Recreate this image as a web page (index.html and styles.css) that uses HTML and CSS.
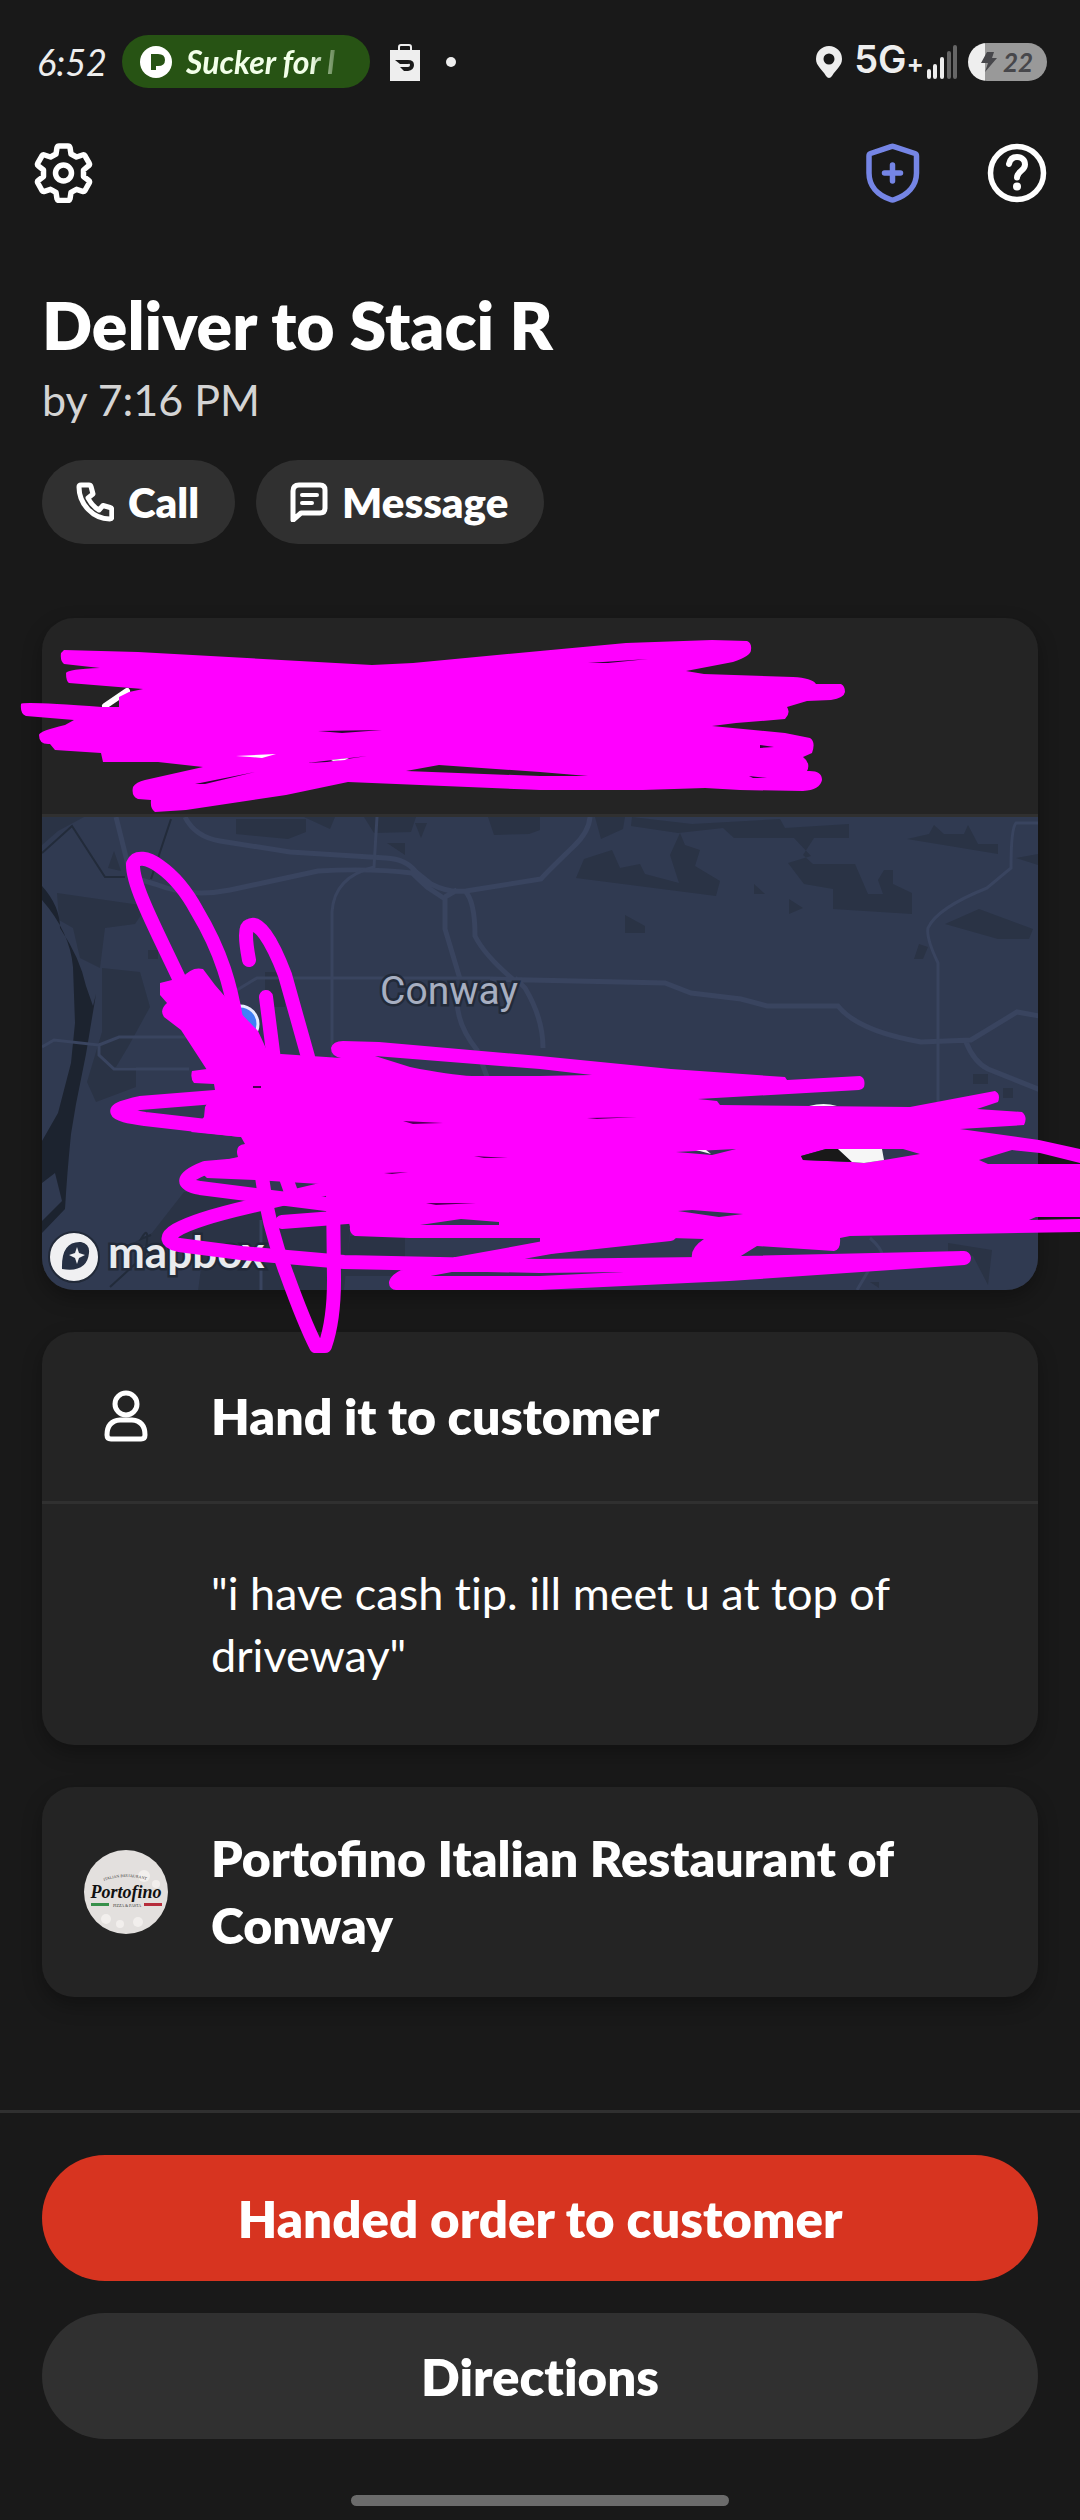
FILE: index.html
```html
<!DOCTYPE html>
<html lang="en">
<head>
<meta charset="utf-8">
<meta name="viewport" content="width=device-width, initial-scale=1">
<title>Deliver to Staci R</title>
<link rel="stylesheet" href="styles.css">
</head>
<body>
<div class="app">
  <header>
    <div class="status">
      <span class="clock">6:52</span>
      <div class="media">
        <svg width="32" height="32" viewBox="0 0 32 32" aria-hidden="true"><circle cx="16" cy="16" r="16" fill="#fff"/><path fill="#275314" d="M11 8h7q7 0 7 6t-7 6h-2v4h-5z"/></svg>
        <span class="track">Sucker for l</span>
      </div>
      <svg class="bag" width="30" height="38" viewBox="0 0 30 38" aria-hidden="true"><path d="M9 8V4q0-2 2-2h8q2 0 2 2v4" fill="none" stroke="#eee" stroke-width="2"/><path fill="#eee" d="M0 7h30v31H0z"/><path fill="#1a1a1a" d="M5 17h13q6 0 6 5t-6 6h-4l-4-4h8q2 0 2-2t-2-1H10z"/></svg>
      <span class="dot"></span>
      <div class="signals">
        <svg width="26" height="32" viewBox="0 0 26 32" aria-hidden="true"><path fill="#eee" fill-rule="evenodd" d="M13 0a13 13 0 0 0-13 13c0 7 6 10 10 17q3 4 6 0c4-7 10-10 10-17A13 13 0 0 0 13 0zm0 7.500a5.500 5.500 0 1 1 0 11 5.500 5.500 0 0 1 0-11z"/></svg>
        <span class="network">5G<small>+</small></span>
        <svg width="32" height="34" viewBox="0 0 32 34" stroke-width="4" stroke-linecap="round" aria-hidden="true"><path stroke="#eee" d="M3 26v6M9 21v11M16 14v18"/><path stroke="#666" d="M23 8v24M29 2v30"/></svg>
        <div class="battery">
          <svg width="16" height="20" viewBox="0 0 16 20" aria-hidden="true"><path fill="#47474b" d="M6 0h7l-2 6h5L4 20l3-9H0z"/></svg>
          <span>22</span>
        </div>
      </div>
    </div>
    <nav class="toolbar">
      <button class="icon" aria-label="Settings"><svg width="60" height="60" viewBox="0 0 60 60" fill="none" stroke="#fff" stroke-width="5.500" stroke-linejoin="round"><path d="M23 4.500Q23.500 3 25 3h9q1.500 0 2 1.500l1 6.500 5.500 3 6-2q1.500-.5 2.500.8l4.200 7.400q.8 1.500-.5 2.500L49.500 27v6.500l5.200 4q1.300 1 .5 2.500L51 47.500q-1 1.300-2.500.8l-6-2-5.500 3-1 6.500q-.5 1.700-2 1.700h-9q-1.500 0-2-1.700l-1-6.500-5.500-3-6 2q-1.500.5-2.500-.8L3.800 40q-.8-1.500.5-2.500l5.200-4V27l-5.200-4.200q-1.300-1-.5-2.600L8 12.800q1-1.300 2.500-.8l6 2 5.500-3z"/><circle cx="29.500" cy="30" r="8"/></svg></button>
      <button class="icon push" aria-label="Safety"><svg width="60" height="60" viewBox="0 0 60 60" fill="none" stroke="#7585e5" stroke-width="5.500" stroke-linejoin="round" stroke-linecap="round"><path d="M28 3.700q1.500-.7 3 0l21 6.800q1.500.5 1.500 2.500v17c0 13-9 22-22 26.500q-2 .8-4 0C14.500 52 6 43 6 30V13q0-2 1.500-2.500zM29.500 22v16M21.500 30h16"/></svg></button>
      <button class="icon" aria-label="Help"><svg width="60" height="60" viewBox="0 0 60 60" fill="none" stroke="#fff" stroke-width="5.500" stroke-linecap="round"><circle cx="30" cy="30" r="26.500"/><path d="M22 21c1-5 4-7 8-7 5 0 8 3 8 7.500 0 6.500-8 6.500-8 13" stroke-width="6"/><circle cx="30" cy="43.500" r="4" fill="#fff" stroke="none"/></svg></button>
    </nav>
  </header>

  <main>
    <h1>Deliver to Staci R</h1>
    <p class="due">by 7:16 PM</p>
    <div class="contact">
      <button class="chip"><svg width="38" height="40" viewBox="0 0 38 40" fill="none" stroke="#fff" stroke-width="5" stroke-linejoin="round"><path d="M5 3h8q1.500 0 2 1.500L17 12l-5 4q4 8 11 12l4-4.500 7 2q1.800.5 1.800 2V35q0 2-2 2C17 37 3 22 3 5q0-2 2-2z"/></svg>Call</button>
      <button class="chip"><svg width="38" height="40" viewBox="0 0 38 40" fill="none" stroke="#fff" stroke-width="5" stroke-linejoin="round" stroke-linecap="round"><path d="M9 3h21q5 0 5 5v18q0 5-5 5H11l-8 7V9q0-6 6-6z"/><path d="M12 13h15M12 21h10" stroke-width="4"/></svg>Message</button>
    </div>

    <section class="card place">
      <div class="address"></div>
      <svg class="map" viewBox="42 817 996 473" preserveAspectRatio="xMidYMid slice" role="img" aria-label="Map of Conway">
        <path fill="#303a51" d="M42 817h996v473H42z"/>
        <g fill="#2a3345">
          <path d="M42 817h42l-26 14-16 14zM236 819h70v13l-18 7-52-5zM305 817h30l-5 12-26-12M364 817h52l-5 15-37 1zM415 823h12l-6 15zM488 817h52v13l-11 4-35 1zM387 843h18v12zM595 817h30l-2 12-22 10zM632 817l60 7 88-5 5 9 64-4v14h-115l-11-10-45 5-47-7zM576 878l8-19 28-9 8 18 20-4 5 10 34 9-9-28 10-22 5 12 15 5-5 16 25 15-4 15zM794 838h20l-11 17 10 9h42l13 30h15l-5-14 6-10h9v14l19 9v21l-79-5v-20l-29-5-16-21 23-7zM907 839l22-5 5-9 10 9h20l4-9 10 19h20v10zM945 924l34-15 54 20-4 10h-31zM625 915l20 11v7h-20zM789 899l14 9-14 6zM754 884l11 10h-11zM919 944l9 3-5 12h-9zM1016 858l22-4v11z"/>
          <path d="M57 893l90 13-12 18-30 4-5 40-20-10-7-30-14-8zM102 968l38 4 10 35-22 40-12 20h20v20l-40 15-9-20 15-50zM108 868l6-17 7 20zM148 950h10v9h-10zM265 972h20v35h-20z"/>
          <path d="M184 1192h170l-10 98H240l-42 1 4-30-35-15h-40l25-13zM350 1236h55v40h-60zM948 1243l44 7-4 35-15-29-25-5zM973 1074h15v10h-15zM1003 1088h10v10h-10zM870 1282h9v6z"/>
        </g>
        <path fill="#1c232f" d="M42 886q18 20 18 42 20 30 26 58l7 20 3-12-10 60-10 50-5 30q-4 40-6 75l-23 24v-12l20-20-7-28-13 10v-42l16-28 13-50 4-40-2-56q-3-35-31-67z"/>
        <g fill="none" stroke="#39445f" stroke-width="5">
          <path d="M185 817q10 20 35 24l70 11 96 6q20 1 30 14l15 12q17 9 35 7l75-12q4-5 32-32 16-15 17-30M116 817l15 60 24 7q35 14 75 6l88-19q52-3 94 2l15 14 18 12v30l15 50M465 891q10 10 10 45 10 20 40 45M445 897l12-7M515 978l10 10q18 30 18 60M457 1000q0 25 20 50l15 40M490 979l175 4 26 10 50 6 26 7h71q20 25 83 36l50-2 46-28 22 4M966 1042q8 20 22 27l55 22"/>
          <path stroke-width="3" d="M377 817l-3 50q-40 10-42 45v150M42 1047l12-7 45 5v10l15 14h75M99 1045l20-8h85M237 990l20-12h233M261 1220v70M1038 823h-22q-5 5-5 45l-24 20q-50 20-59 40-2 10 10 35v140M870 1238q25 22 0 30l-13 22"/>
        </g>
        <path fill="none" stroke="#222b3a" stroke-width="2" d="M42 853l30-27 33 51h20M171 819l-20 60M151 1235l-10 4q10-18 4 16l-35 32"/>
        <text class="city" x="380" y="1004">Conway</text>
        <circle cx="240" cy="1024" r="18" fill="#4080f5" stroke="#e6edff" stroke-width="3"/>
        <circle cx="74" cy="1257" r="25" fill="#f0f0f2" stroke="#222a39" stroke-width="2"/>
        <path fill="#263044" d="M62 1269q-1-28 19-27 9 2 8 11-2 20-27 16z"/><path fill="#f0f0f2" d="M77 1247l2 6 6 2-6 3-2 6-2-6-6-3 6-2z"/>
        <text class="brand" x="108" y="1268">mapbox</text>
      </svg>
      <svg class="scribble" viewBox="42 618 996 672" preserveAspectRatio="none" aria-hidden="true">
        <path stroke="#fff" stroke-width="6" stroke-linecap="round" d="M105 706l22-15"/>
        <path fill="#f0f" fill-rule="evenodd" d="M64 650L138 652 372 665 413 663 540 651 626 643 712 640 747 641Q752 643 751 650 751 656 733 662L686 671 704 674 793 677Q812 678 816 684L841 684Q845 686 845 692 844 698 831 700L807 701 787 707Q791 713 785 719L736 723 712 726 785 733 810 738Q816 742 812 753L803 757Q811 763 807 771 822 770 822 780 820 790 803 791L740 790 705 788 643 790 540 790 348 782 286 795 186 810 155 812Q150 809 151 800L138 799Q131 796 133 787 136 782 145 780L203 767 158 762 103 762 101 753 55 750 50 744Q39 745 39 735 39 731 65 725L74 720 26 716Q20 714 21 704 21 701 102 707L119 707 119 697 129 692 143 689 69 683Q66 681 66 673 68 669 100 668L64 664Q60 661 61 653zM406 771L439 765 540 772 588 776 540 776z"/>
        <path fill="#2a0b31" d="M318 731l64-1-40 3zM195 784l60-12-50 12zM307 763l60-7-40 6zM588 663l60-4-40 4zM760 745l14 2-14 1zM749 776l18 2-14 0z"/>
        <path fill="#fff" d="M236 756l40-2-14 4-12-1zM331 760l18-2-4 2-12 1z"/>
        <path fill="#f0f" d="M160 983L172 980 182 978Q192 966 203 969L215 985 228 1000 258 1031 270 1057 207 1070 181 1030 164 1017Q159 1010 167 1003L160 995z"/>
        <path fill="#f0f" fill-rule="evenodd" d="M192 1071L207 1069 262 1057 281 1054 341 1058Q331 1056 331 1048 333 1041 343 1041L379 1042 540 1056 671 1069 785 1077 787 1080 860 1076Q866 1078 864 1087 862 1090 859 1090L698 1099 717 1101 720 1105 910 1107 995 1091Q1001 1094 998 1102L977 1109 1022 1112Q1028 1117 1024 1125L960 1129 1039 1140 1080 1149 1080 1163 1040 1153 1012 1150 979 1160 988 1164 1080 1164 1080 1232 850 1236 840 1238Q841 1250 834 1251L757 1246 736 1259 692 1259Q690 1248 704 1239L671 1238 540 1255 540 1238 410 1238 355 1236Q349 1233 350 1227L345 1205 322 1194 320 1184 255 1180 207 1178 195 1167 238 1157Q234 1145 245 1144L241 1137 191 1132 204 1117 205 1107 215 1090 214 1084 194 1083Q190 1078 192 1071zM375 1056L540 1069 592 1075 540 1076 472 1076Q450 1075 410 1067zM801 1156L826 1149 882 1149 903 1149 920 1154 884 1160 864 1163 852 1162 803 1160zM676 1152L736 1149 712 1155zM678 1211L692 1210 743 1214 719 1217zM420 1225L461 1219 499 1222 499 1225zM1029 1220L1036 1217 1080 1217 1080 1219z"/>
        <path fill="#191919" d="M801 1156L826 1149 838 1149 852 1162 803 1160z"/><path fill="#f6f6f6" d="M838 1149H882L884 1160 864 1163 852 1162zM809 1106q15-4 28 0zM696 1150h10l5 4z"/>
        <path fill="#510057" d="M403 1121l40 2-30 1zM474 1156l34 2-24 0zM384 1173l24-1-16 2zM426 1203l50 0-40 2zM587 1118l50-1-40 2zM253 1086h8v2h-8z"/>
        <g fill="none" stroke="#f0f" stroke-width="14" stroke-linecap="round" stroke-linejoin="round">
          <path d="M188 998C164 944 132 888 133 864 140 848 175 870 197 911 218 946 234 985 240 1050"/>
          <path d="M249 960Q243 928 249 926C258 920 271 938 285 975L308 1057"/>
          <path d="M266 997L274 1060"/>
          <path d="M215 1097L140 1103C108 1110 110 1114 145 1119L241 1130"/>
          <path d="M240 1165L205 1168C182 1177 180 1184 200 1188L350 1207 400 1210"/>
          <path d="M350 1183L248 1207C175 1224 153 1239 179 1245L241 1253 344 1262 540 1266 700 1264 964 1258 729 1274 540 1283 396 1283Q399 1274 440 1267L550 1247 670 1234"/>
          <path d="M282 1222L360 1216"/>
          <path d="M262 1177C267 1220 278 1252 287 1275Q304 1322 316 1346L325 1346Q334 1320 334 1280L333 1190M286 1178L291 1192"/>
        </g>
      </svg>
    </section>

    <section class="card">
      <div class="row">
        <svg class="person" width="84" height="56" viewBox="0 0 84 56" fill="none" stroke="#fff" stroke-width="5" aria-hidden="true"><circle cx="42" cy="15" r="11"/><path d="M27 50q-4 0-4-4 0-14 13-15h12q13 1 13 15 0 4-4 4z"/></svg>
        <h2>Hand it to customer</h2>
      </div>
      <p class="note">"i have cash tip. ill meet u at top of driveway"</p>
    </section>

    <section class="card">
      <div class="row store">
        <svg width="84" height="84" viewBox="0 0 84 84" aria-hidden="true"><circle cx="42" cy="42" r="42" fill="#e3e0de"/><g fill="#f2efed"><circle cx="22" cy="69" r="5"/><circle cx="36" cy="74" r="4"/><circle cx="54" cy="72" r="5"/><circle cx="60" cy="26" r="6"/><circle cx="72" cy="34" r="4"/></g><path id="arc" d="M20 31q22-8 46 0" fill="none"/><text class="logo-small"><textPath href="#arc">ITALIAN RESTAURANT</textPath></text><text class="logo-name" x="42" y="48" text-anchor="middle">Portofino</text><path fill="#37904a" d="M7 53h18v3H7z"/><path fill="#b62c3b" d="M60 53h18v3H60z"/><text class="logo-small" x="43" y="57" text-anchor="middle">PIZZA &amp; PASTA</text></svg>
        <h2>Portofino Italian Restaurant of Conway</h2>
      </div>
    </section>
  </main>

  <footer>
    <button class="action primary">Handed order to customer</button>
    <button class="action">Directions</button>
    <div class="home"></div>
  </footer>
</div>
</body>
</html>
```
FILE: styles.css
```css
* { box-sizing: border-box; }
body {
  margin: 0;
  background: #191919;
  color: #fff;
  font-family: Lato, "Open Sans", sans-serif;
}
.app {
  min-height: 100vh;
  display: flex;
  flex-direction: column;
  overflow-x: hidden;
}
svg { display: block; flex: none; }
button {
  border: 0;
  padding: 0;
  margin: 0;
  background: none;
  color: inherit;
  font: inherit;
  font-weight: 800;
  cursor: pointer;
}
h1, h2, p { margin: 0; }

.status {
  display: flex;
  align-items: center;
  height: 53px;
  margin-top: 35px;
  padding: 0 33px 0 37px;
  color: #eee;
}
.clock { width: 85px; font-size: 36px; font-style: italic; }
.media {
  display: flex;
  align-items: center;
  gap: 14px;
  width: 248px;
  height: 53px;
  padding: 0 20px 0 18px;
  border-radius: 27px;
  background: #275314;
}
.track {
  width: 160px;
  overflow: hidden;
  white-space: nowrap;
  font-size: 32px;
  font-style: italic;
  font-weight: 700;
  color: #f2ffe9;
  mask-image: linear-gradient(90deg, #000 78%, transparent);
}
.bag { margin-left: 20px; }
.dot { width: 10px; height: 10px; margin-left: 26px; border-radius: 50%; background: #eee; }
.signals { display: flex; align-items: center; margin-left: auto; }
.network {
  display: flex;
  align-items: baseline;
  margin: 0 2px 0 12px;
  font-family: Inter, sans-serif;
  font-size: 38px;
  font-weight: 600;
  line-height: 44px;
}
.network small { font-size: 26px; }
.battery {
  display: flex;
  align-items: center;
  gap: 6px;
  width: 79px;
  height: 38px;
  margin-left: 10px;
  padding-left: 13px;
  border-radius: 19px;
  background: linear-gradient(90deg, #eee 17px, #999 17px);
  color: #47474b;
  font-size: 26px;
  font-style: italic;
  font-weight: 700;
}

.toolbar {
  display: flex;
  align-items: center;
  gap: 64px;
  margin-top: 55px;
  padding: 0 33px 0 34px;
}
.push { margin-left: auto; }

main { flex: 1; padding: 82px 42px 0; }
h1 { font-size: 66px; line-height: 80px; font-weight: 800; }
.due { margin-top: 5px; font-size: 43px; line-height: 60px; color: #d4d4d4; }
.contact { display: flex; gap: 21px; margin-top: 30px; }
.chip {
  display: flex;
  align-items: center;
  gap: 14px;
  height: 84px;
  padding: 0 36px 0 34px;
  border-radius: 42px;
  background: #303030;
  font-size: 42px;
}
.card {
  margin-top: 42px;
  border-radius: 32px;
  background: #242424;
  box-shadow: 0 8px 20px rgba(0, 0, 0, .3);
}
.place { position: relative; margin-top: 74px; }
.address { height: 199px; border-bottom: 3px solid #303030; }
.map { width: 100%; height: 473px; border-radius: 0 0 32px 32px; }
.scribble {
  position: absolute;
  inset: 0;
  width: 100%;
  height: 100%;
  overflow: visible;
  pointer-events: none;
}
.city, .brand { paint-order: stroke; stroke: #222a39; stroke-width: 5px; }
.city { font-family: Roboto, sans-serif; font-size: 39px; fill: #a7afc1; }
.brand { font-size: 44px; font-weight: 700; fill: #e9ebee; }

.row { display: flex; align-items: center; gap: 43px; padding: 51px 42px; }
.row + .note { border-top: 3px solid #303030; }
h2 { font-size: 50px; line-height: 67px; font-weight: 800; }
.note {
  padding: 58px 90px 59px 169px;
  font-size: 45px;
  line-height: 62px;
  font-variant-ligatures: none;
}
.store { padding: 38px 42px; }
.logo-name { font: italic 700 18px "Liberation Serif", serif; fill: #111; }
.logo-small { font: 4px "Liberation Serif", serif; fill: #333; }

footer {
  display: flex;
  flex-direction: column;
  gap: 32px;
  margin-top: 113px;
  padding: 42px 42px 14px;
  border-top: 3px solid #303030;
}
.action {
  height: 126px;
  border-radius: 63px;
  background: #303030;
  font-size: 51px;
  font-variant-ligatures: none;
}
.primary { background: #d73420; }
.home { align-self: center; width: 378px; height: 11px; margin-top: 24px; border-radius: 6px; background: #6b6b6b; }
```
